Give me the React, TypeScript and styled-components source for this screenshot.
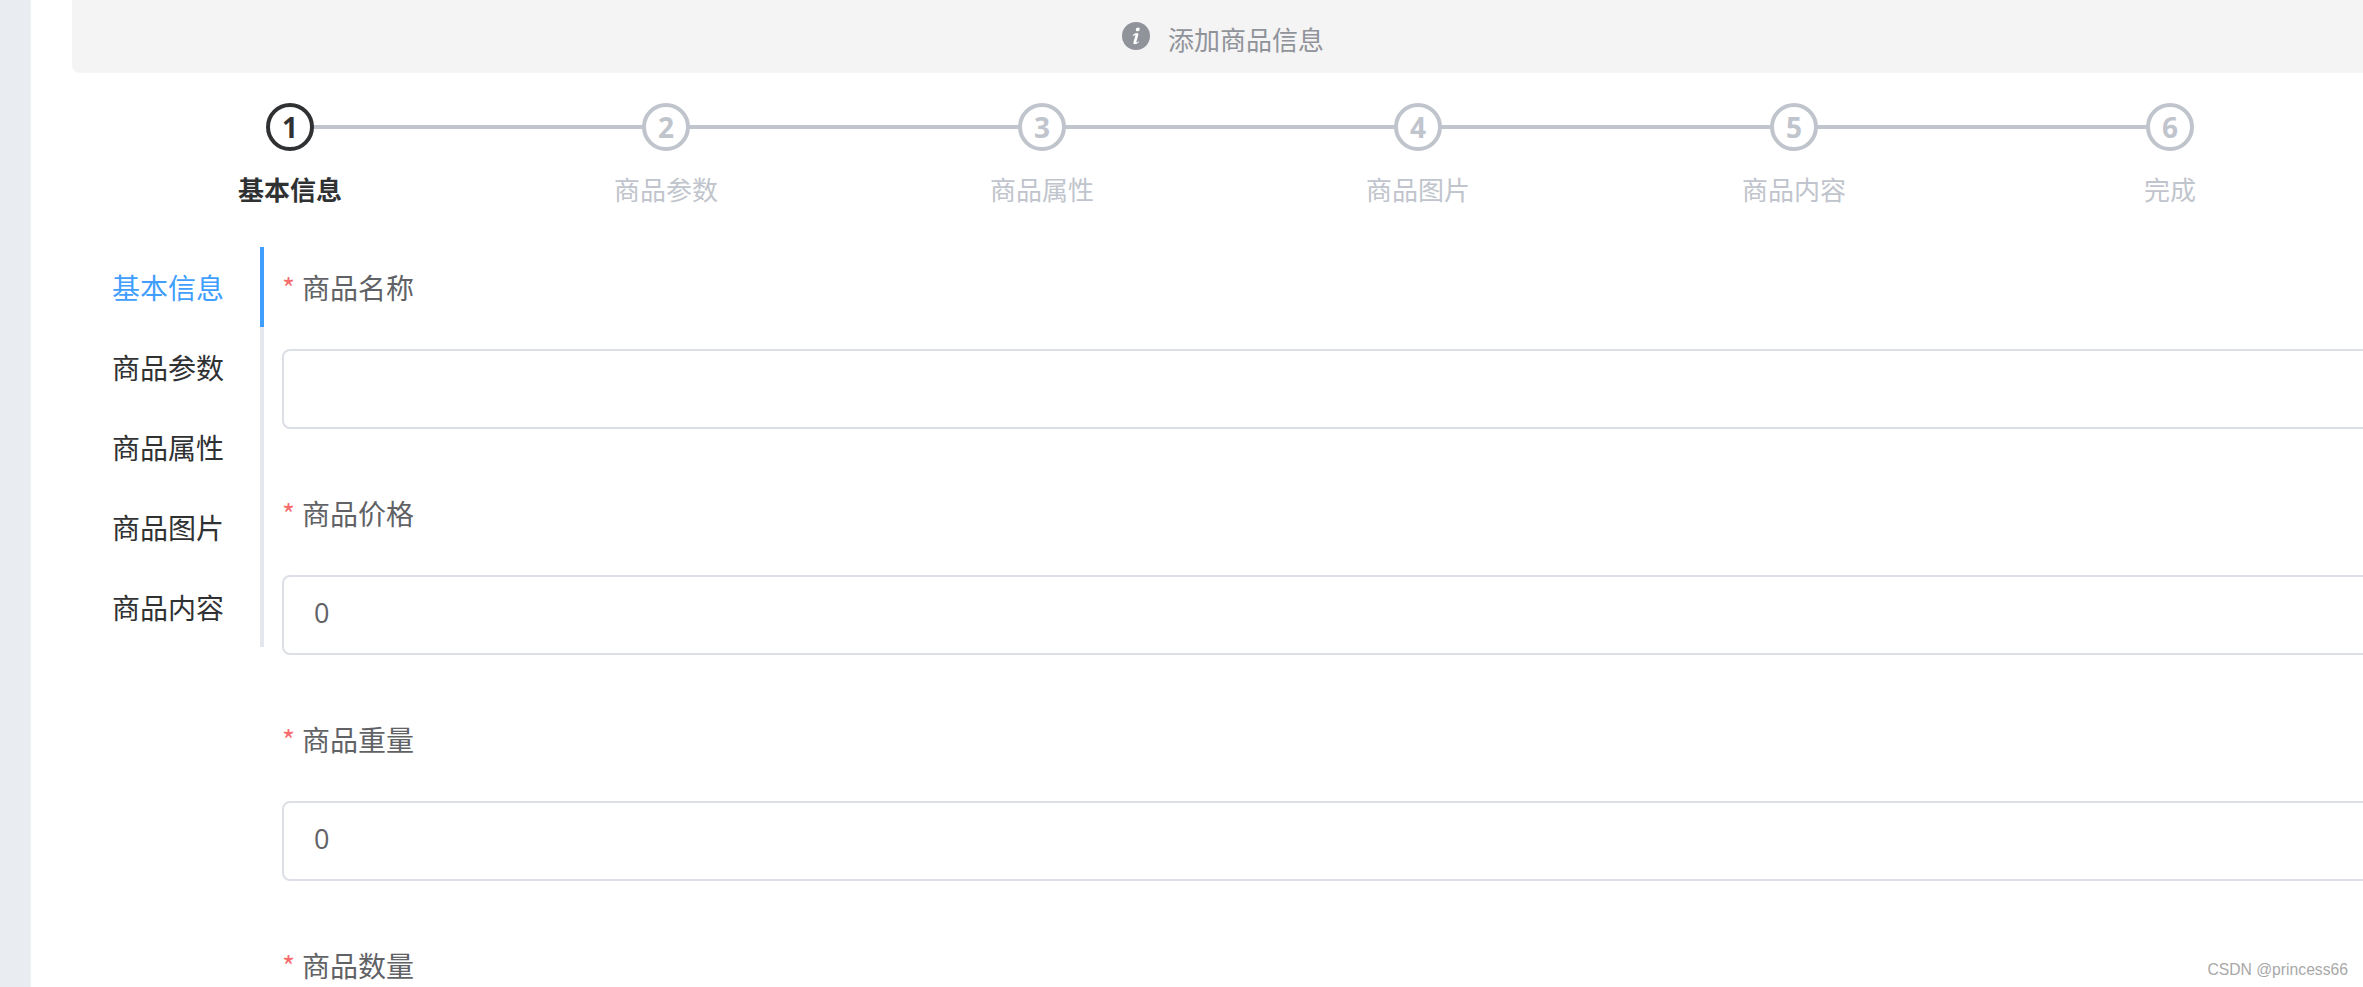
import styled, { createGlobalStyle } from 'styled-components';

const GlobalStyle = createGlobalStyle`
    html, body {
        margin: 0;
        padding: 0;
        background: #fff;
        overflow: hidden;
    }
    * {
        box-sizing: border-box;
    }
`

const Page = styled.div`
    display: flex;
    position: relative;
    width: 2363px;
    height: 987px;
    overflow: hidden;
    font-family: "Noto Sans CJK SC", "Open Sans", sans-serif;
`

const Gutter = styled.div`
    flex: 0 0 31px;
    background-color: #e9edf2;
    border-right: 1px solid #eef1f5;
`

const Main = styled.div`
    flex: 0 0 2302px;
    margin-left: 41px;
`

const Alert = styled.div`
    display: flex;
    align-items: center;
    justify-content: center;
    gap: 18px;
    height: 73px;
    padding-top: 4px;
    background-color: #f4f4f5;
    border-radius: 0 0 8px 8px;
    color: #909399;
    font-size: 26px;
    line-height: 1;
`

const InfoIcon = styled.svg`
    width: 28px;
    height: 28px;
    margin-top: -5px;
    flex: none;
`

const Steps = styled.div`
    display: flex;
    padding-left: 30px;
    margin-top: 30px;
`

const Step = styled.div`
    flex: 0 0 376px;
    display: flex;
    flex-direction: column;
    align-items: center;
    position: relative;
`

const StepLine = styled.div`
    position: absolute;
    top: 22px;
    left: 50%;
    width: 100%;
    height: 4px;
    background-color: #c0c4cc;
`

const StepCircle = styled.div<{ $active?: boolean }>`
    position: relative;
    z-index: 1;
    width: 48px;
    height: 48px;
    display: flex;
    align-items: center;
    justify-content: center;
    border-radius: 50%;
    background-color: #fff;
    border: 4px solid ${p => (p.$active ? '#303133' : '#c0c4cc')};
    color: ${p => (p.$active ? '#303133' : '#c0c4cc')};
    font-family: "Open Sans", sans-serif;
    font-size: 28px;
    font-weight: 700;
    line-height: 1;
`

const StepTitle = styled.div<{ $active?: boolean }>`
    margin-top: 19px;
    font-size: 26px;
    line-height: 38px;
    color: ${p => (p.$active ? '#303133' : '#c0c4cc')};
    font-weight: ${p => (p.$active ? 700 : 400)};
`

const Body = styled.div`
    display: flex;
    align-items: flex-start;
    margin-top: 39px;
`

const Rail = styled.div`
    flex: 0 0 192px;
    border-right: 4px solid #e4e7ed;
`

const RailItem = styled.div<{ $active?: boolean }>`
    position: relative;
    height: 80px;
    padding-right: 36px;
    text-align: right;
    font-size: 28px;
    line-height: 80px;
    color: ${p => (p.$active ? '#409eff' : '#303133')};
    &::after {
        content: '';
        display: ${p => (p.$active ? 'block' : 'none')};
        position: absolute;
        top: 0;
        right: -4px;
        width: 4px;
        height: 80px;
        background-color: #409eff;
    }
`

const Form = styled.div`
    flex: 1;
    margin-left: 18px;
`

const FormItem = styled.div`
    padding-top: 22px;
    margin-bottom: 44px;
`

const Label = styled.label`
    display: block;
    height: 36px;
    margin-bottom: 44px;
    font-size: 28px;
    line-height: 36px;
    color: #606266;
    &::before {
        content: '*';
        color: #f56c6c;
        margin-right: 7px;
    }
`

const Input = styled.input`
    display: block;
    width: 100%;
    height: 80px;
    padding: 0 30px 5px;
    border: 2px solid #dcdfe6;
    border-radius: 8px;
    outline: none;
    background: #fff;
    color: #606266;
    font-family: "Open Sans", sans-serif;
    font-size: 27px;
`

const Watermark = styled.div`
    position: absolute;
    right: 15px;
    bottom: 8px;
    font-family: "Liberation Sans", sans-serif;
    font-size: 15.7px;
    line-height: 18px;
    color: #a8a8a8;
`

const steps = ['基本信息', '商品参数', '商品属性', '商品图片', '商品内容', '完成'];
const tabs = ['基本信息', '商品参数', '商品属性', '商品图片', '商品内容'];
const fields = [
    { label: '商品名称', value: '' },
    { label: '商品价格', value: '0' },
    { label: '商品重量', value: '0' },
    { label: '商品数量', value: '0' },
];

export default function App() {
    return (
        <Page>
            <GlobalStyle />
            <Gutter />
            <Main>
                <Alert>
                    <InfoIcon viewBox="0 0 28 28">
                        <circle cx="14" cy="14" r="14" fill="#909399" />
                        <path d="M16 5.600c1.200 0 1.900.8 1.700 1.800-.2 1-1.100 1.800-2.200 1.800-1.100 0-1.800-.8-1.700-1.800.2-1 1.100-1.800 2.200-1.800zM10.600 13.400c1.400-1.500 3-2.300 4.500-2.300 1.100 0 1.500.8 1.100 2.200l-1.800 6.400c-.1.500 0 .7.300.7.500 0 1.100-.4 1.900-1.200l.6.600c-1.500 1.700-3 2.500-4.500 2.500-1.200 0-1.600-.8-1.200-2.200l1.800-6.300c.1-.5 0-.7-.3-.7-.5 0-1.100.4-1.800 1.100z" fill="#ffffff" />
                    </InfoIcon>
                    <span>添加商品信息</span>
                </Alert>
                <Steps>
                    {steps.map((s, i) => (
                        <Step key={s}>
                            {i < steps.length - 1 && <StepLine />}
                            <StepCircle $active={i === 0}>{i + 1}</StepCircle>
                            <StepTitle $active={i === 0}>{s}</StepTitle>
                        </Step>
                    ))}
                </Steps>
                <Body>
                    <Rail>
                        {tabs.map((t, i) => (
                            <RailItem key={t} $active={i === 0}>{t}</RailItem>
                        ))}
                    </Rail>
                    <Form>
                        {fields.map(f => (
                            <FormItem key={f.label}>
                                <Label>{f.label}</Label>
                                <Input defaultValue={f.value} />
                            </FormItem>
                        ))}
                    </Form>
                </Body>
            </Main>
            <Watermark>CSDN @princess66</Watermark>
        </Page>
    );
}
